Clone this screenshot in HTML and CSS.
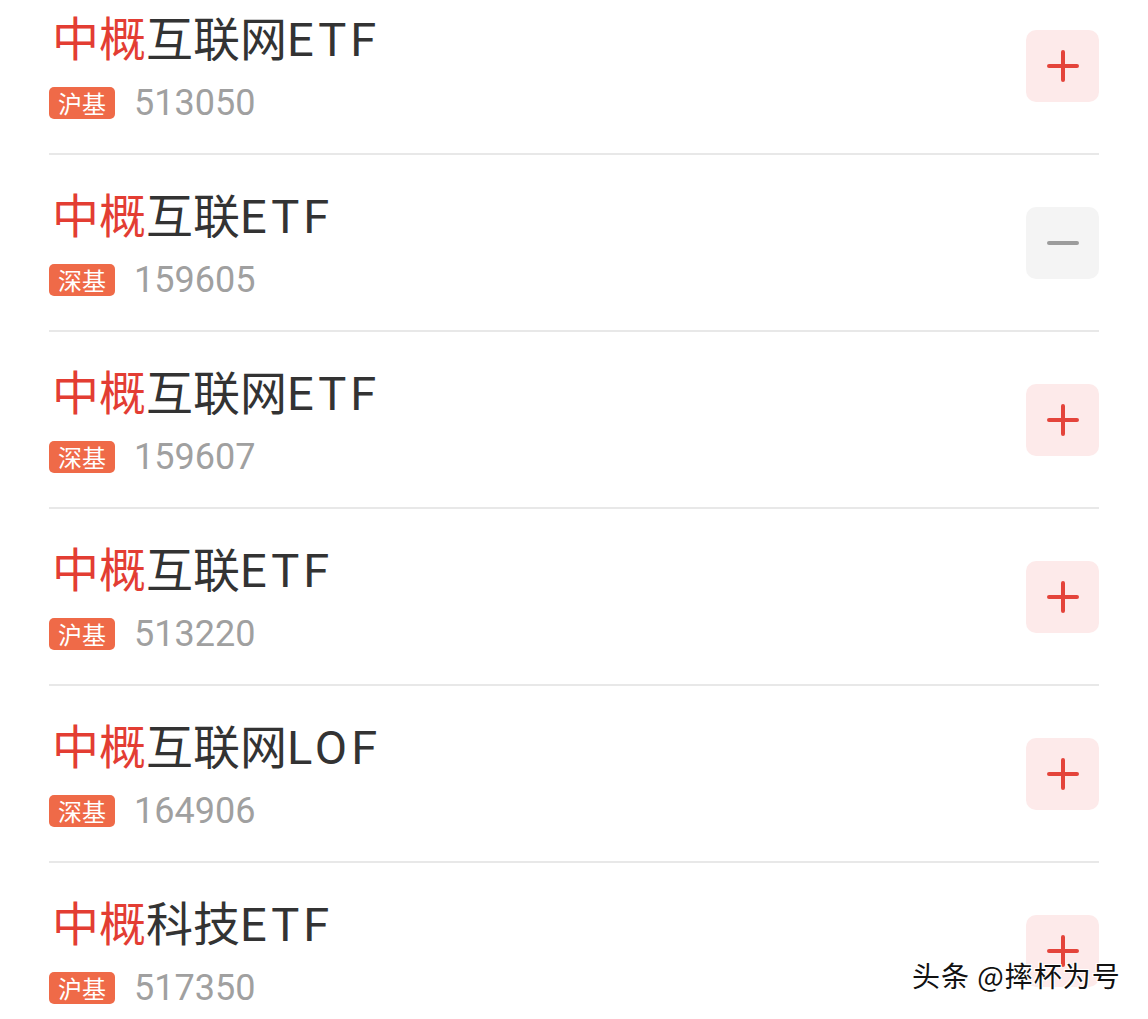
FILE: index.html
```html
<!DOCTYPE html>
<html lang="zh-CN">
<head>
    <meta charset="UTF-8">
    <meta name="viewport" content="width=device-width, initial-scale=1.0">
    <title>中概互联基金</title>
    <link rel="stylesheet" href="styles.css">
</head>
<body>
    <ul class="fund-list">
        <li class="fund">
            <div class="info">
                <div class="name"><span class="hl">中概</span>互联网<span class="en">ETF</span></div>
                <div class="meta"><span class="tag">沪基</span><span class="code">513050</span></div>
            </div>
            <button class="btn add" type="button"><svg viewBox="0 0 40 40"><path d="M20 6v28M6 20h28"/></svg></button>
        </li>
        <li class="fund">
            <div class="info">
                <div class="name"><span class="hl">中概</span>互联<span class="en">ETF</span></div>
                <div class="meta"><span class="tag">深基</span><span class="code">159605</span></div>
            </div>
            <button class="btn remove" type="button"><svg viewBox="0 0 40 40"><path d="M6 20h28"/></svg></button>
        </li>
        <li class="fund">
            <div class="info">
                <div class="name"><span class="hl">中概</span>互联网<span class="en">ETF</span></div>
                <div class="meta"><span class="tag">深基</span><span class="code">159607</span></div>
            </div>
            <button class="btn add" type="button"><svg viewBox="0 0 40 40"><path d="M20 6v28M6 20h28"/></svg></button>
        </li>
        <li class="fund">
            <div class="info">
                <div class="name"><span class="hl">中概</span>互联<span class="en">ETF</span></div>
                <div class="meta"><span class="tag">沪基</span><span class="code">513220</span></div>
            </div>
            <button class="btn add" type="button"><svg viewBox="0 0 40 40"><path d="M20 6v28M6 20h28"/></svg></button>
        </li>
        <li class="fund">
            <div class="info">
                <div class="name"><span class="hl">中概</span>互联网<span class="en">LOF</span></div>
                <div class="meta"><span class="tag">深基</span><span class="code">164906</span></div>
            </div>
            <button class="btn add" type="button"><svg viewBox="0 0 40 40"><path d="M20 6v28M6 20h28"/></svg></button>
        </li>
        <li class="fund">
            <div class="info">
                <div class="name"><span class="hl">中概</span>科技<span class="en">ETF</span></div>
                <div class="meta"><span class="tag">沪基</span><span class="code">517350</span></div>
            </div>
            <button class="btn add" type="button"><svg viewBox="0 0 40 40"><path d="M20 6v28M6 20h28"/></svg></button>
        </li>
    </ul>
    <div class="watermark">头条 @摔杯为号</div>
</body>
</html>
```

FILE: styles.css
```css
body {
    margin: 0;
    padding: 0;
    background: #fff;
    font-family: "Noto Sans CJK SC", "Noto Sans", sans-serif;
    overflow: hidden;
    height: 1019px;
    position: relative;
}
.fund-list {
    list-style: none;
    margin: -22px 49px 0;
    padding: 0;
}
.fund {
    display: flex;
    align-items: flex-start;
    justify-content: space-between;
    height: 145px;
    padding-top: 30px;
    border-bottom: 2px solid #e8e8e8;
}
.info {
    display: flex;
    flex-direction: column;
    gap: 18px;
}
.name {
    font-size: 47px;
    line-height: 56px;
    color: #333;
    margin-left: 3px;
}
.name .hl {
    color: #e33d33;
}
.name .en {
    font-family: Roboto, "Noto Sans", sans-serif;
    letter-spacing: 4px;
}
.meta {
    display: flex;
    align-items: center;
    gap: 19px;
    height: 34px;
}
.tag {
    background: #ef6a48;
    color: #fff;
    font-size: 24px;
    line-height: 32px;
    width: 66px;
    text-align: center;
    border-radius: 5px;
}
.code {
    font-family: Roboto, "Noto Sans", sans-serif;
    font-size: 36px;
    line-height: 34px;
    color: #a0a0a0;
}
.btn {
    width: 73px;
    height: 72px;
    margin-top: 22px;
    border: none;
    border-radius: 10px;
    padding: 0;
    display: flex;
    align-items: center;
    justify-content: center;
}
.btn svg {
    width: 40px;
    height: 40px;
    fill: none;
    stroke-width: 4;
    stroke-linecap: round;
}
.add {
    background: #fdeaea;
}
.add svg {
    stroke: #e4443b;
}
.remove {
    background: #f4f4f4;
}
.remove svg {
    stroke: #9c9c9c;
}
.watermark {
    position: absolute;
    left: 912px;
    top: 955px;
    font-size: 28px;
    color: #111;
    letter-spacing: 1px;
    text-shadow: 1px 1px 0 #fff, -1px -1px 0 #fff, 1px -1px 0 #fff, -1px 1px 0 #fff;
}
```
